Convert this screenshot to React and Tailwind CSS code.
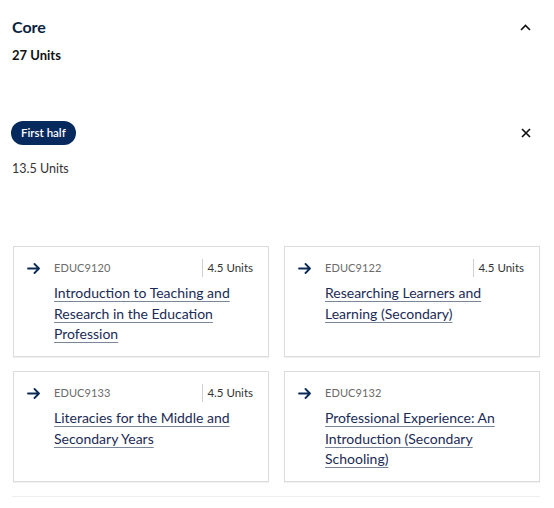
import React from 'react';

const COURSES = [
    { code: 'EDUC9120', units: '4.5 Units', title: 'Introduction to Teaching and Research in the Education Profession' },
    { code: 'EDUC9122', units: '4.5 Units', title: 'Researching Learners and Learning (Secondary)' },
    { code: 'EDUC9133', units: '4.5 Units', title: 'Literacies for the Middle and Secondary Years' },
    { code: 'EDUC9132', units: null, title: 'Professional Experience: An Introduction (Secondary Schooling)' },
];

const Arrow = () => (
    <svg width="13" height="11" viewBox="0 0 13 11" fill="none" stroke="#0b2a56" strokeWidth="1.8" strokeLinecap="round" strokeLinejoin="round">
        <path d="M1 5.5h11M7.5 1l4.5 4.5L7.5 10" />
    </svg>
);

const CourseCard = ({ course }) => (
    <div className="border border-[#dcdcdc] shadow-[0_1px_1px_rgba(0,0,0,0.06)] bg-white h-[111px] pl-[13px] pr-[15px] pt-[12px]">
        <div className="flex items-center h-[18px]">
            <Arrow />
            <span className="ml-[14px] text-[11px] text-[#6b6b6b] tracking-[0.1px] flex-1">{course.code}</span>
            {course.units && (
                <span className="border-l border-[#cfcfcf] pl-[4px] h-[18px] flex items-center text-[11.5px] text-[#333]">
                    {course.units}
                </span>
            )}
        </div>
        <a href="#" className="block ml-[27px] mt-[6px] text-[14px] leading-[20.5px] text-[#1b2b55] underline decoration-[#7a869a] underline-offset-[3px]">
            {course.title}
        </a>
    </div>
);

export default function App() {
    return (
        <div className="w-[554px] h-[508px] bg-white px-3 pt-[17px] font-['Segoe_UI','Lato',sans-serif] text-[#222]">
            <div className="flex items-center justify-between">
                <h3 className="text-[16px] leading-[20px] font-bold text-[#0b1f40]">Core</h3>
                <svg className="mr-[11px]" width="11" height="7" viewBox="0 0 11 7" fill="none" stroke="#111" strokeWidth="1.6">
                    <path d="M1 6l4.5-4.5L10 6" />
                </svg>
            </div>
            <div className="mt-[10px] text-[13px] font-bold leading-[16px] text-[#111]">27 Units</div>

            <div className="mt-[58px] flex items-center justify-between">
                <span className="ml-[-1px] rounded-full bg-[#072a5e] text-white text-[11.5px] font-semibold h-[24px] px-[10px] flex items-center">
                    First half
                </span>
                <svg className="mr-[11px]" width="10" height="10" viewBox="0 0 10 10" fill="none" stroke="#111" strokeWidth="1.7">
                    <path d="M1 1l8 8M9 1l-8 8" />
                </svg>
            </div>
            <div className="mt-[16px] text-[12.5px] leading-[16px] text-[#333]">13.5 Units</div>

            <div className="mt-[69px] ml-px w-[527px] grid grid-cols-2 gap-x-[15px] gap-y-[14px]">
                {COURSES.map(c => (
                    <CourseCard key={c.code} course={c} />
                ))}
            </div>

            <div className="mt-[14px] border-t border-[#eeeeee] w-[528px]" />
        </div>
    );
}
